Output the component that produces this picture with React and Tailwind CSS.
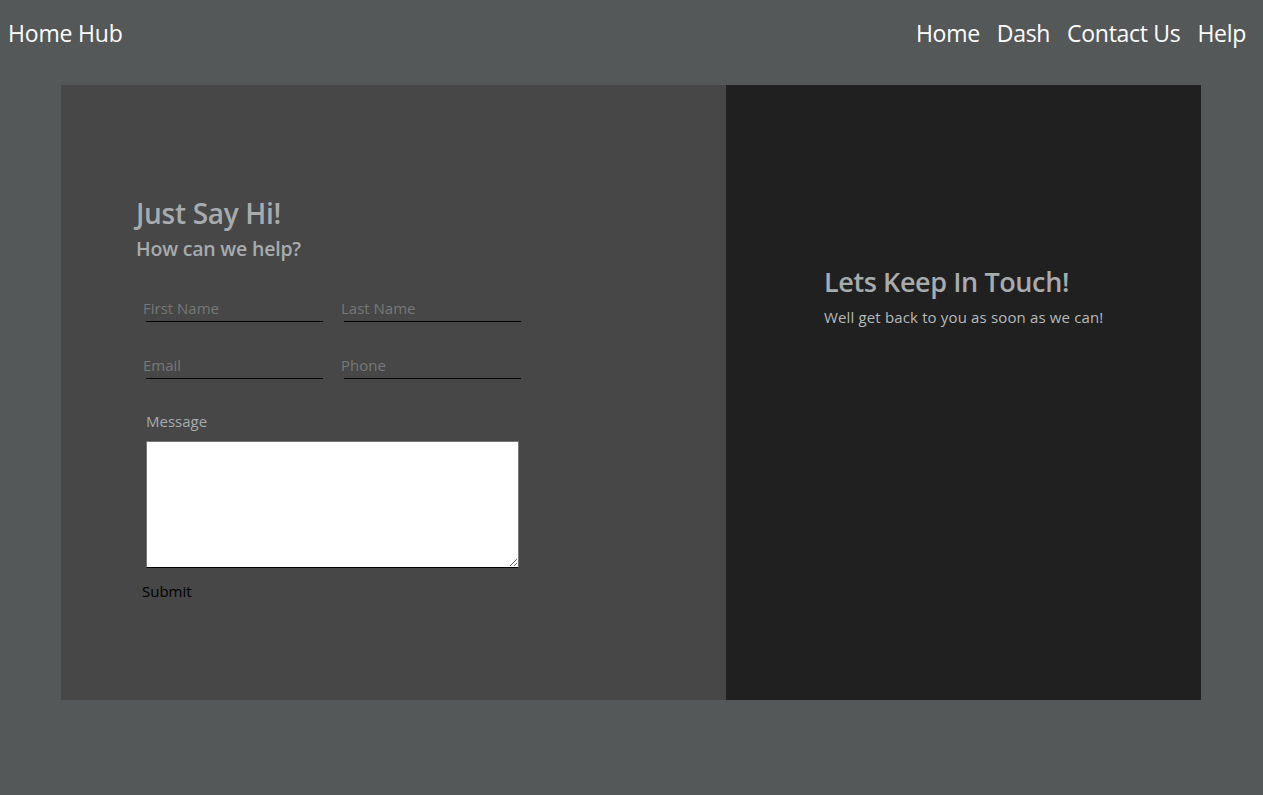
export default function App() {
  const font = { fontFamily: '"Open Sans", "Noto Sans", sans-serif' };
  const inputCls = "block h-[20px] -ml-[3px] w-[180px] bg-transparent outline-none text-[15px] leading-[20px] placeholder:text-[#767878] text-[#ccc]";
  return (
    <div className="min-h-[795px] bg-[#555859]" style={font}>
      <nav className="h-[85px] flex items-start justify-between pl-[8px] pr-[17px] pt-[17px]">
        <div className="text-[23px] leading-[32px] text-white tracking-[-0.2px]">Home Hub</div>
        <div className="flex gap-[17px] text-[23px] leading-[32px] text-white tracking-[-0.3px]">
          <span>Home</span>
          <span>Dash</span>
          <span>Contact Us</span>
          <span>Help</span>
        </div>
      </nav>
      <div className="mx-[61px] flex h-[615px]">
        <div className="w-[665px] bg-[#464746] pl-[75px] pt-[110px]">
          <h1 className="text-[28px] leading-[36px] font-semibold text-[#a7abae] tracking-[-0.3px]">Just Say Hi!</h1>
          <h2 className="mt-[5px] text-[19.5px] leading-[26px] font-semibold text-[#a7abae] tracking-[-0.2px]">How can we help?</h2>
          <form className="mt-[36px]">
            <div className="flex gap-[21px] pl-[10px]">
              <div className="w-[177px] border-b border-black pb-[3px]">
                <input placeholder="First Name" className={inputCls} />
              </div>
              <div className="w-[177px] border-b border-black pb-[3px]">
                <input placeholder="Last Name" className={inputCls} />
              </div>
            </div>
            <div className="mt-[33px] flex gap-[21px] pl-[10px]">
              <div className="w-[177px] border-b border-black pb-[3px]">
                <input placeholder="Email" className={inputCls} />
              </div>
              <div className="w-[177px] border-b border-black pb-[3px]">
                <input placeholder="Phone" className={inputCls} />
              </div>
            </div>
            <div className="mt-[32px] pl-[10px] text-[15px] leading-[20px] text-[#a7abae]">Message</div>
            <div className="mt-[10px] ml-[10px] w-[373px]">
              <textarea className="block w-[373px] h-[127px] bg-white border border-[#767676] border-b-black resize-y outline-none" />
            </div>
            <button type="button" className="mt-[13px] ml-[6px] text-[15px] leading-[20px] text-black">Submit</button>
          </form>
        </div>
        <div className="w-[475px] bg-[#202020] pl-[98px] pt-[180px]">
          <h2 className="text-[27px] leading-[34px] font-semibold text-[#a7abae] tracking-[-0.4px]">Lets Keep In Touch!</h2>
          <p className="mt-[8px] text-[15px] leading-[20px] text-[#b5b9bc] tracking-[0.15px]">Well get back to you as soon as we can!</p>
        </div>
      </div>
    </div>
  );
}
